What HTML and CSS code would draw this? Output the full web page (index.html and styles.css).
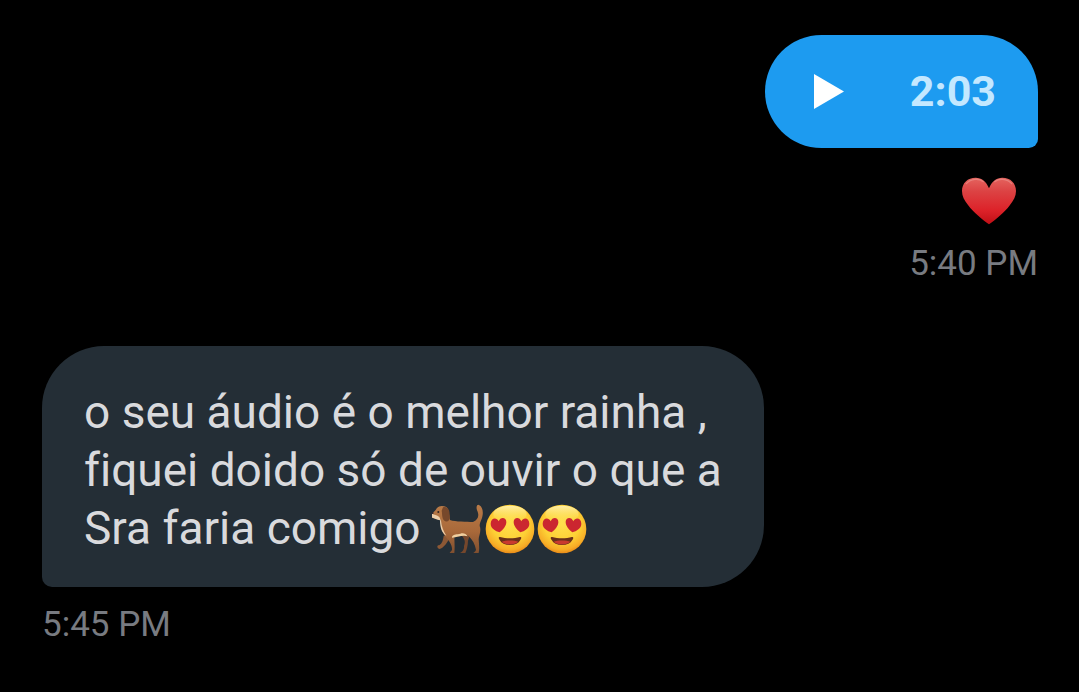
FILE: index.html
```html
<!DOCTYPE html>
<html lang="pt">
<head>
    <meta charset="UTF-8">
    <meta name="viewport" content="width=device-width, initial-scale=1">
    <title>Mensagens</title>
    <link rel="stylesheet" href="styles.css">
</head>
<body>
    <!-- shared emoji shapes -->
    <svg class="defs" aria-hidden="true">
        <defs>
            <radialGradient id="faceFill" cx="0.5" cy="0.38" r="0.62">
                <stop offset="0" stop-color="#ffe04e"/>
                <stop offset="0.6" stop-color="#fdd035"/>
                <stop offset="0.88" stop-color="#f7ac26"/>
                <stop offset="1" stop-color="#e88a18"/>
            </radialGradient>
            <linearGradient id="shine" x1="0" y1="0" x2="0" y2="1">
                <stop offset="0" stop-color="#fff6c8" stop-opacity="0.8"/>
                <stop offset="1" stop-color="#ffe75c" stop-opacity="0"/>
            </linearGradient>
            <linearGradient id="heartFill" x1="0" y1="0" x2="0" y2="1">
                <stop offset="0" stop-color="#e4645f"/>
                <stop offset="0.3" stop-color="#dc4243"/>
                <stop offset="0.7" stop-color="#dd2229"/>
                <stop offset="1" stop-color="#c00f16"/>
            </linearGradient>
            <linearGradient id="furFill" x1="0" y1="0" x2="0" y2="1">
                <stop offset="0" stop-color="#b97b48"/>
                <stop offset="0.55" stop-color="#a9693a"/>
                <stop offset="1" stop-color="#804f2f"/>
            </linearGradient>
        </defs>
        <symbol id="eyes" viewBox="0 0 156 156">
            <circle cx="78" cy="78" r="73" fill="url(#faceFill)"/>
            <ellipse cx="78" cy="33" rx="50" ry="25" fill="url(#shine)"/>
            <path d="M47 88C34 84 20 76 20 62C20 46 37 41 44 55C49 40 67 42 67 57C67 69 57 80 47 88Z" fill="#cb2630"/>
            <path d="M109 88C99 80 89 69 89 57C89 42 107 40 112 55C119 41 136 46 136 62C136 76 122 84 109 88Z" fill="#cb2630"/>
            <path d="M48 102C66 107 90 107 108 102C113 101 113 106 109 111C104 121 93 126 78 126C63 126 52 121 47 111C43 106 43 101 48 102Z" fill="#69301a"/>
            <path d="M53 116C64 111 92 111 103 116C92 127 64 127 53 116Z" fill="#c93a2e"/>
        </symbol>
    </svg>

    <main class="thread">
        <section class="message sent">
            <button class="bubble voice" type="button" aria-label="2:03">
                <svg class="play" viewBox="0 0 30 35" aria-hidden="true">
                    <path d="M0 0L30 17.5L0 35Z" fill="currentColor"/>
                </svg>
                <span class="duration">2:03</span>
            </button>
            <svg class="reaction" viewBox="0 0 164 144" aria-hidden="true">
                <path d="M82 142C74 137 62 128 48 115C38 106 28 96 19 84C8 70 1 58 1 42C1 18 18 2 42 2C60 2 74 13 82 34C90 13 104 2 122 2C146 2 163 18 163 42C163 58 156 70 145 84C136 96 126 106 116 115C102 128 90 137 82 142Z" fill="url(#heartFill)"/>
                <path d="M14 20C28 3 53 4 65 14M99 14C111 4 136 3 150 20" fill="none" stroke="#f0a29c" stroke-width="4" stroke-linecap="round" opacity="0.5"/>
            </svg>
            <time class="time" datetime="17:40">5:40 PM</time>
        </section>

        <section class="message received">
            <p class="bubble text">
                o seu áudio é o melhor rainha ,<br>
                fiquei doido só de ouvir o que a<br>
                Sra faria comigo
                <span class="emojis"><svg class="emoji" viewBox="51 38 156 156" aria-hidden="true">
                    <!-- legs on the far side -->
                    <path d="M86 136C84 153 79 164 69 165C65 169 67 174 73 176C87 174 98 153 107 139Z" fill="#8c5835"/>
                    <path d="M141 137C151 148 151 157 147 167C148 179 142 184 135 188H151C155 178 159 165 159 151L164 136Z" fill="#75472c"/>
                    <!-- body, tail and near legs -->
                    <path d="M66 53C72 46 83 45 94 50C103 58 102 77 105 89C122 95 154 94 174 95C188 89 193 78 188 64C182 53 185 43 190 43C200 45 205 60 203 73C201 89 194 94 194 107C200 122 191 136 191 147C192 162 194 176 191 188H175C177 185 182 184 183 178C180 161 172 148 161 137C147 130 130 142 118 138C118 152 120 169 118 188H104C105 184 110 183 111 178C112 164 102 151 93 141C81 128 78 106 78 89C68 87 60 83 51 82C48 77 47 71 51 68C57 65 60 62 66 53Z" fill="url(#furFill)"/>
                    <path d="M51 69C57 75 66 74 73 80L78 91C80 109 85 122 94 136C81 130 75 112 75 90C66 88 57 84 52 82C49 78 48 72 51 69Z" fill="#edcfaa"/>
                    <path d="M111 139C116 130 126 133 136 130C145 127 153 130 158 138C143 133 128 141 111 142Z" fill="#f1d0a0"/>
                    <path d="M84 51C98 46 104 59 104 73C107 87 100 96 91 93C80 88 82 71 80 61Z" fill="#77482b"/>
                    <ellipse cx="52" cy="68" rx="4" ry="3" fill="#30262a"/>
                    <circle cx="70" cy="65" r="3" fill="#30231f"/>
                </svg><svg class="emoji" aria-hidden="true"><use href="#eyes"/></svg><svg class="emoji" aria-hidden="true"><use href="#eyes"/></svg></span>
            </p>
            <time class="time" datetime="17:45">5:45 PM</time>
        </section>
    </main>
</body>
</html>
```

FILE: styles.css
```css
* {
    box-sizing: border-box;
}

body {
    margin: 0;
    background-color: #000;
    font-family: Roboto, "Noto Sans", sans-serif;
    font-variant-ligatures: none;
}

.defs {
    position: absolute;
    width: 0;
    height: 0;
}

.thread {
    display: flex;
    flex-direction: column;
    gap: 60px;
    padding: 35px 41px 35px 42px;
}

.message {
    display: flex;
    flex-direction: column;
}

.sent {
    align-items: flex-end;
}

.received {
    align-items: flex-start;
}

.bubble {
    margin: 0;
    border: none;
    border-radius: 62px;
}

.voice {
    display: flex;
    align-items: center;
    gap: 66px;
    padding: 28px 42px 28px 49px;
    border-bottom-right-radius: 10px;
    background-color: #1d9bf0;
    color: #fff;
    font-family: inherit;
    cursor: pointer;
}

.play {
    width: 30px;
    height: 35px;
}

.duration {
    color: #c4e8ff;
    font-size: 43px;
    font-weight: 700;
    line-height: 57px;
}

.reaction {
    width: 56px;
    height: 48px;
    margin: 29px 21px 17px;
}

.text {
    padding: 37px 42px 30px;
    border-bottom-left-radius: 10px;
    background-color: #242e36;
    color: #d9dadd;
    font-size: 46px;
    line-height: 58px;
}

.emojis {
    white-space: nowrap;
}

.emoji {
    width: 52px;
    height: 52px;
    vertical-align: -11px;
}

.time {
    color: #787b81;
    font-size: 35px;
    line-height: 44px;
}

.received .time {
    margin-top: 16px;
}
```
